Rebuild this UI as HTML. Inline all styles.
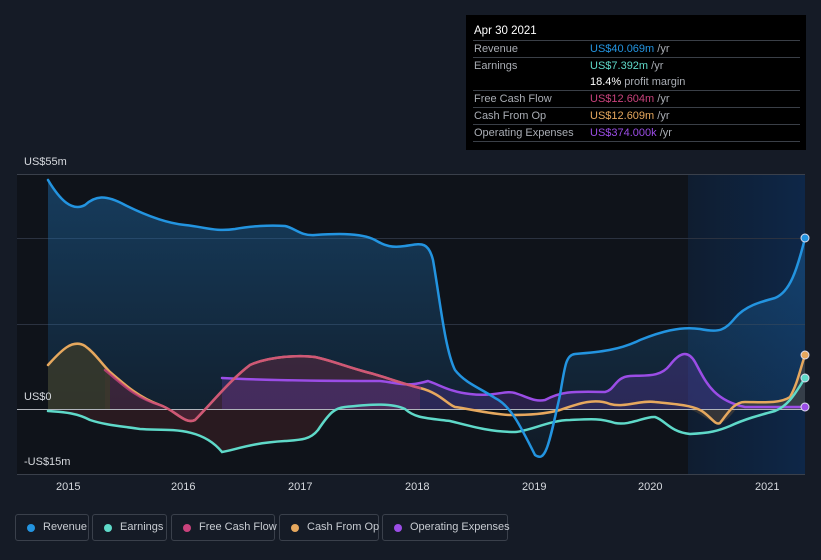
<!DOCTYPE html>
<html><head><meta charset="utf-8"><style>
body{margin:0;width:821px;height:560px;background:#151b26;font-family:"Liberation Sans",sans-serif;overflow:hidden;position:relative}
.tt{position:absolute;left:466px;top:15px;width:340px;height:135px;background:#000;color:#fff;font-size:11px}
.tt .h{position:absolute;left:8px;top:10px;font-size:11.5px}
.row{position:absolute;left:7px;width:327px;border-top:1px solid #3a3f47;height:16px}
.row span{position:absolute;top:2px;white-space:nowrap}
.l{left:1px;color:#a9adb4}.v{left:117px}
.lg{position:absolute;top:514px;height:27px;border:1px solid #3a404b;border-radius:3px;color:#c8ccd2;font-size:11px;line-height:25px;box-sizing:border-box;white-space:nowrap}
.lg i{position:absolute;left:11px;top:9px;width:8px;height:8px;border-radius:50%}
.lg span{position:absolute;left:27px;white-space:nowrap}
.ax{position:absolute;color:#d6d9de;font-size:11px}
</style></head><body>
<svg width="821" height="560" style="position:absolute;left:0;top:0">
<defs>
<linearGradient id="rg" x1="0" y1="0" x2="0" y2="1"><stop offset="0" stop-color="#1f6fb0" stop-opacity=".45"/><stop offset="1" stop-color="#1f6fb0" stop-opacity=".08"/></linearGradient>
<linearGradient id="hg" x1="0" y1="0" x2="1" y2="0"><stop offset="0" stop-color="#0f1d30"/><stop offset="1" stop-color="#0e2748"/></linearGradient>
</defs>
<rect x="17" y="174" width="788" height="300" fill="#0f131a"/>
<rect x="688" y="174" width="117" height="300" fill="url(#hg)"/>
<line x1="17" y1="174.5" x2="805" y2="174.5" stroke="#3a404b"/>
<line x1="17" y1="238.5" x2="805" y2="238.5" stroke="#2b3240"/>
<line x1="17" y1="324.5" x2="805" y2="324.5" stroke="#2b3240"/>
<line x1="17" y1="474.5" x2="805" y2="474.5" stroke="#3a404b"/>
<path d="M48,180 C60,200 72,212 85,205 C95,196 105,194 125,205 C145,215 165,223 185,225 C205,227 215,232 235,229 C250,226 270,225 285,226 C295,228 300,236 315,235 C330,234 360,232 375,240 C385,246 392,248 405,246 C420,244 428,240 433,260 C440,300 445,350 455,370 C465,383 480,388 495,398 C510,405 520,425 535,455 C545,462 548,450 560,395 C565,365 566,355 575,354 C600,352 620,350 640,340 C660,332 680,326 700,329 C720,333 725,330 735,318 C745,306 760,302 775,298 C790,292 797,270 805,238 L805,409 L48,409Z" fill="url(#rg)"/>
<path d="M48,409 C60,410 75,412 90,420 C105,425 120,426 140,429 C165,431 200,425 222,452 C235,450 250,443 285,441 C300,440 310,440 318,430 C330,412 335,408 345,407 C365,405 390,402 405,409Z" fill="#3a1f24" opacity=".6"/>
<path d="M105,370 C120,382 135,398 160,405 C175,410 185,425 195,420 C210,405 230,380 250,365 C270,356 300,355 315,357 C330,360 350,368 370,373 C385,377 400,383 420,388 L420,409 L105,409Z" fill="#5a2840" opacity=".55"/>
<path d="M48,365 C60,352 72,338 85,346 C95,353 100,362 110,372 L110,409 L48,409Z" fill="#3b3b2a" opacity=".8"/>
<path d="M222,378 C260,380 300,381 380,381 C395,382 405,388 428,381 C440,385 450,392 470,394 C495,397 505,390 515,393 C530,398 535,402 545,400 C560,392 570,391 605,392 C615,390 615,377 630,376 C645,375 660,378 670,365 C680,352 688,350 695,362 C705,380 712,400 745,407 L805,407 L805,409 L222,409Z" fill="#5b3aa0" opacity=".35"/>
<path d="M688,409 C700,412 705,420 718,423 C730,423 735,405 745,403 C760,402 780,404 790,397 C797,385 800,370 805,355 L805,409Z" fill="#5a4a3a" opacity=".5"/>
<line x1="17" y1="409.5" x2="805" y2="409.5" stroke="#b0b4bb" stroke-width="1"/>
<g fill="none" stroke-width="2.5" stroke-linecap="round">
<path d="M222,378 C260,380 300,381 380,381 C395,382 405,388 428,381 C440,385 450,392 470,394 C495,397 505,390 515,393 C530,398 535,402 545,400 C560,392 570,391 605,392 C615,390 615,377 630,376 C645,375 660,378 670,365 C680,352 688,350 695,362 C705,380 712,400 745,407 L805,407" stroke="#9b4de6"/>
<path d="M48,365 C60,352 72,338 85,346 C95,353 100,362 110,372 C125,385 140,398 160,405 C175,410 185,425 195,420 C210,405 230,380 250,365 C270,356 300,355 315,357 C330,360 350,368 370,373 C385,377 400,383 420,388 C440,393 448,405 455,407 C470,409 490,414 510,415 C530,415 545,414 560,410 C580,403 595,398 610,404 C625,408 640,400 655,402 C675,404 690,405 700,410 C710,415 715,426 720,423 C730,410 735,402 745,402 C760,402 780,404 790,397 C797,385 800,370 805,355" stroke="#e6a85e"/>
<path d="M105,370 C120,382 135,398 160,405 C175,410 185,425 195,420 C210,405 230,380 250,365 C270,356 300,355 315,357 C330,360 350,368 370,373 C385,377 400,383 420,388" stroke="#c9427c" opacity=".8"/>
<path d="M48,411 C60,412 75,412 90,420 C105,425 120,426 140,429 C165,431 200,425 222,452 C235,450 250,443 285,441 C300,440 310,440 318,430 C330,412 335,408 345,407 C365,405 390,402 405,409 C415,418 425,418 450,421 C470,426 490,432 515,432 C530,431 550,420 570,420 C590,419 600,418 615,423 C630,426 645,416 655,417 C665,420 670,432 690,434 C710,433 718,431 730,426 C745,419 760,415 775,411 C790,405 797,390 805,378" stroke="#5fd9c9"/>
<path d="M48,180 C60,200 72,212 85,205 C95,196 105,194 125,205 C145,215 165,223 185,225 C205,227 215,232 235,229 C250,226 270,225 285,226 C295,228 300,236 315,235 C330,234 360,232 375,240 C385,246 392,248 405,246 C420,244 428,240 433,260 C440,300 445,350 455,370 C465,383 480,388 495,398 C510,405 520,425 535,455 C545,462 548,450 560,395 C565,365 566,355 575,354 C600,352 620,350 640,340 C660,332 680,326 700,329 C720,333 725,330 735,318 C745,306 760,302 775,298 C790,292 797,270 805,238" stroke="#2394e0"/>
</g>
<circle cx="805" cy="238" r="4" fill="#2394e0" stroke="#dde" stroke-width="1"/>
<circle cx="805" cy="355" r="4" fill="#e6a85e" stroke="#dde" stroke-width="1"/>
<circle cx="805" cy="378" r="4" fill="#5fd9c9" stroke="#dde" stroke-width="1"/>
<circle cx="805" cy="407" r="4" fill="#9b4de6" stroke="#dde" stroke-width="1"/>
</svg>
<div class="ax" style="left:24px;top:156px">US$55m</div>
<div class="ax" style="left:24px;top:391px">US$0</div>
<div class="ax" style="left:24px;top:456px">-US$15m</div>
<div class="ax" style="left:56px;top:481px">2015</div>
<div class="ax" style="left:171px;top:481px">2016</div>
<div class="ax" style="left:288px;top:481px">2017</div>
<div class="ax" style="left:405px;top:481px">2018</div>
<div class="ax" style="left:522px;top:481px">2019</div>
<div class="ax" style="left:638px;top:481px">2020</div>
<div class="ax" style="left:755px;top:481px">2021</div>
<div class="tt">
<div class="h">Apr 30 2021</div>
<div class="row" style="top:25px"><span class="l">Revenue</span><span class="v"><b style="font-weight:normal;color:#2394e0">US$40.069m</b> <span style="position:static;color:#a9adb4">/yr</span></span></div>
<div class="row" style="top:42px;height:33px"><span class="l">Earnings</span><span class="v"><b style="font-weight:normal;color:#5fd9c9">US$7.392m</b> <span style="position:static;color:#a9adb4">/yr</span></span><span class="v" style="top:18px">18.4% <span style="position:static;color:#a9adb4">profit margin</span></span></div>
<div class="row" style="top:75px"><span class="l">Free Cash Flow</span><span class="v"><b style="font-weight:normal;color:#c9427c">US$12.604m</b> <span style="position:static;color:#a9adb4">/yr</span></span></div>
<div class="row" style="top:92px"><span class="l">Cash From Op</span><span class="v"><b style="font-weight:normal;color:#e6a85e">US$12.609m</b> <span style="position:static;color:#a9adb4">/yr</span></span></div>
<div class="row" style="top:109px;border-bottom:1px solid #3a3f47"><span class="l">Operating Expenses</span><span class="v"><b style="font-weight:normal;color:#9b4de6">US$374.000k</b> <span style="position:static;color:#a9adb4">/yr</span></span></div>
</div>
<div class="lg" style="left:15px;width:74px"><i style="background:#2394e0"></i><span>Revenue</span></div>
<div class="lg" style="left:92px;width:75px"><i style="background:#5fd9c9"></i><span>Earnings</span></div>
<div class="lg" style="left:171px;width:104px"><i style="background:#c9427c"></i><span>Free Cash Flow</span></div>
<div class="lg" style="left:279px;width:100px"><i style="background:#e6a85e"></i><span>Cash From Op</span></div>
<div class="lg" style="left:382px;width:126px"><i style="background:#9b4de6"></i><span>Operating Expenses</span></div>
</body></html>
